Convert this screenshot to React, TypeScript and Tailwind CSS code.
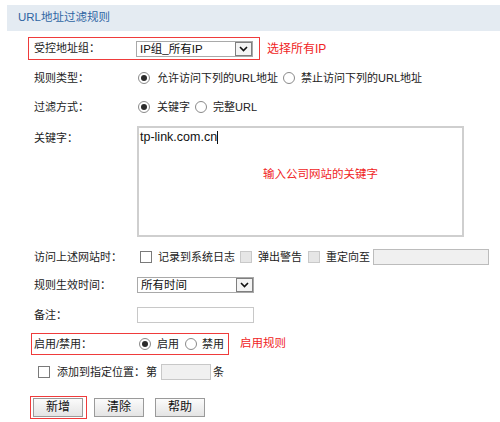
import React from "react";

const font = "font-['Liberation_Sans','Noto_Sans_CJK_SC',sans-serif]";

const Radio = ({ checked = false }: { checked?: boolean }) => (
  <span className="w-[12px] h-[12px] rounded-full border border-[#8a8a8a] bg-white flex items-center justify-center shrink-0">
    {checked && <span className="w-[6px] h-[6px] rounded-full bg-[#2b2b2b]" />}
  </span>
);

const Checkbox = ({ disabled = false }: { disabled?: boolean }) => (
  <span
    className={
      disabled
        ? "block w-[12px] h-[12px] border border-[#c9c9c9] bg-[#e6e6e6] shrink-0"
        : "block w-[12px] h-[12px] border border-[#7a7a7a] bg-white shrink-0"
    }
  />
);

const Select = ({ value }: { value: string }) => (
  <div className="w-[117px] h-[16px] border border-[#a9a9a9] bg-white flex items-center shrink-0">
    <span className="flex-1 pl-[3px] text-[11.5px] leading-[14px] text-[#111] whitespace-nowrap">{value}</span>
    <span className="w-[17px] h-[14px] border border-[#7f7f7f] bg-[#f4f4f4] flex items-center justify-center">
      <svg width="9" height="6" viewBox="0 0 9 6">
        <path d="M1 1 L4.5 4.5 L8 1" fill="none" stroke="#111" strokeWidth="1.6" />
      </svg>
    </span>
  </div>
);

const Button = ({ label }: { label: string }) => (
  <button className="block w-[50px] h-[19px] border border-[#9a9a9a] bg-gradient-to-b from-[#fbfbfb] to-[#e4e4e4] text-[12px] leading-[17px] text-[#111]">
    {label}
  </button>
);

const Label = ({ text }: { text: string }) => (
  <span className="w-[103px] shrink-0 whitespace-nowrap">{text}</span>
);

export default function App() {
  return (
    <div className={`w-[500px] h-[422px] bg-white overflow-hidden whitespace-nowrap ${font} text-[11px] text-[#222]`}>
      {/* title bar */}
      <div className="mt-[5px] ml-[7px] h-[26px] bg-[#e4ebf2] pl-[11px] flex items-center">
        <span className="text-[11.5px] text-[#2f65a3]">URL地址过滤规则</span>
      </div>

      {/* 受控地址组 */}
      <div className="mt-[6px] flex items-center">
        <div className="ml-[28px] w-[232px] h-[23px] border border-[#ef3b3b] pl-[5px] flex items-center">
          <span className="w-[102px] shrink-0">受控地址组：</span>
          <Select value="IP组_所有IP" />
        </div>
        <span className="ml-[7px] text-[12px] text-[#f02424]">选择所有IP</span>
      </div>

      {/* 规则类型 */}
      <div className="mt-[4px] h-[28px] pl-[34px] flex items-center">
        <Label text="规则类型：" />
        <span className="ml-[1px]"><Radio checked /></span>
        <span className="ml-[7px]">允许访问下列的URL地址</span>
        <span className="ml-[5px]"><Radio /></span>
        <span className="ml-[6px]">禁止访问下列的URL地址</span>
      </div>

      {/* 过滤方式 */}
      <div className="mt-[1px] h-[28px] pl-[34px] flex items-center">
        <Label text="过滤方式：" />
        <span className="ml-[1px]"><Radio checked /></span>
        <span className="ml-[7px]">关键字</span>
        <span className="ml-[5px]"><Radio /></span>
        <span className="ml-[6px]">完整URL</span>
      </div>

      {/* 关键字 */}
      <div className="mt-[5px] pl-[34px] flex items-start">
        <span className="w-[103px] shrink-0 pt-[4px]">关键字：</span>
        <div className="w-[327px] h-[111px] border-2 border-[#cfcfcf] bg-white relative">
          <div className="pl-[1px] pt-[1px] text-[12.5px] leading-[16px] text-[#111] flex items-center">
            tp-link.com.cn<span className="w-px h-[13px] bg-[#111]" />
          </div>
          <span className="absolute left-[124px] top-[38px] text-[11.5px] text-[#f02424]">输入公司网站的关键字</span>
        </div>
      </div>

      {/* 访问上述网站时 */}
      <div className="mt-[10px] h-[20px] pl-[34px] flex items-center">
        <Label text="访问上述网站时：" />
        <span className="ml-[3px]"><Checkbox /></span>
        <span className="ml-[6px]">记录到系统日志</span>
        <span className="ml-[5px]"><Checkbox disabled /></span>
        <span className="ml-[6px]">弹出警告</span>
        <span className="ml-[6px]"><Checkbox disabled /></span>
        <span className="ml-[6px]">重定向至</span>
        <span className="ml-[3px] w-[116px] h-[16px] border border-[#bcbcbc] bg-[#f0f0f0]" />
      </div>

      {/* 规则生效时间 */}
      <div className="mt-[8px] h-[20px] pl-[34px] flex items-center">
        <Label text="规则生效时间：" />
        <Select value="所有时间" />
      </div>

      {/* 备注 */}
      <div className="mt-[10px] h-[20px] pl-[34px] flex items-center">
        <Label text="备注：" />
        <span className="w-[117px] h-[16px] border border-[#c8c8c8] bg-white" />
      </div>

      {/* 启用/禁用 */}
      <div className="mt-[8px] flex items-center">
        <div className="ml-[31px] w-[198px] h-[22px] border border-[#ef3b3b] pl-[2px] flex items-center">
          <span className="w-[105px] shrink-0">启用/禁用：</span>
          <Radio checked />
          <span className="ml-[6px]">启用</span>
          <span className="ml-[6px]"><Radio /></span>
          <span className="ml-[5px]">禁用</span>
        </div>
        <span className="ml-[11px] text-[11.5px] text-[#f02424]">启用规则</span>
      </div>

      {/* 添加到指定位置 */}
      <div className="mt-[7px] h-[20px] pl-[38px] flex items-center">
        <Checkbox />
        <span className="ml-[7px]">添加到指定位置：</span>
        <span className="ml-[1px]">第</span>
        <span className="ml-[4px] w-[50px] h-[16px] border border-[#c8c8c8] bg-[#f0f0f0]" />
        <span className="ml-[2px]">条</span>
      </div>

      {/* buttons */}
      <div className="mt-[14px] flex items-center">
        <div className="ml-[30px] w-[57px] h-[23px] border border-[#ef3b3b] pl-[2px] flex items-center">
          <Button label="新增" />
        </div>
        <span className="ml-[7px]"><Button label="清除" /></span>
        <span className="ml-[11px]"><Button label="帮助" /></span>
      </div>
    </div>
  );
}
